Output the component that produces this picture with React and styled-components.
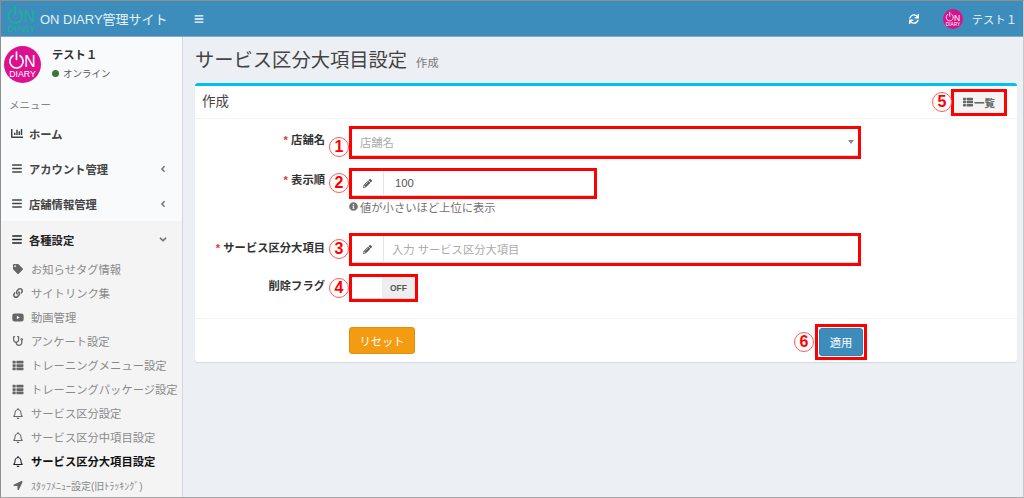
import React from "react"
import styled, { createGlobalStyle } from "styled-components"
import {
  FaAngleDown,
  FaAngleLeft,
  FaBars,
  FaChartBar,
  FaInfoCircle,
  FaLink,
  FaLocationArrow,
  FaPencilAlt,
  FaRegBell,
  FaStethoscope,
  FaSync,
  FaTag,
  FaThList,
  FaYoutube,
} from "react-icons/fa"

const GlobalStyle = createGlobalStyle`
  html, body {
    margin: 0;
    height: 100%;
    overflow: hidden;
  }
  body {
    font-family: "Liberation Sans", "Noto Sans CJK JP", sans-serif;
    color: #333;
  }
`

const Logo = ({ size, color, background }) => (
  <svg
    width={size}
    height={size}
    viewBox={background ? "0 0 40 40" : "5 4 30 30"}
    aria-hidden="true"
  >
    {background && <circle cx="20" cy="20" r="20" fill={background} />}
    <path
      d="M9.6 10.5a7.2 7.2 0 1 0 7.8 0"
      fill="none"
      stroke={color}
      strokeWidth="1.8"
      strokeLinecap="round"
    />
    <path d="M13.5 6.5v8" stroke={color} strokeWidth="1.8" strokeLinecap="round" />
    <text x="22" y="23" fontSize="17" fontFamily="Liberation Sans" fill={color}>
      N
    </text>
    <text
      x="20"
      y="33"
      fontSize="9.5"
      textAnchor="middle"
      fontFamily="Liberation Sans"
      fill={color}
    >
      DIARY
    </text>
  </svg>
)

const App = () => (
  <Page>
    <GlobalStyle />
    <Header>
      <Brand>
        <Logo size={29} color="#1fb096" />
        <BrandName>ON DIARY管理サイト</BrandName>
      </Brand>
      <HeaderToggle>
        <FaBars />
      </HeaderToggle>
      <HeaderRight>
        <FaSync size={10} />
        <HeaderUser>
          <Logo size={20} color="#fff" background="#d9128c" />
          テスト１
        </HeaderUser>
      </HeaderRight>
    </Header>
    <Body>
      <Sidebar>
        <UserPanel>
          <Logo size={37} color="#fff" background="#dd1190" />
          <UserInfo>
            <UserName>テスト１</UserName>
            <UserStatus>
              <StatusDot />
              オンライン
            </UserStatus>
          </UserInfo>
        </UserPanel>
        <MenuTitle>メニュー</MenuTitle>
        <MenuItem>
          <FaChartBar size={13} />
          <span>ホーム</span>
        </MenuItem>
        <MenuItem>
          <FaBars size={11} />
          <span>アカウント管理</span>
          <Chevron>
            <FaAngleLeft size={10} />
          </Chevron>
        </MenuItem>
        <MenuItem>
          <FaBars size={11} />
          <span>店舗情報管理</span>
          <Chevron>
            <FaAngleLeft size={10} />
          </Chevron>
        </MenuItem>
        <OpenGroup>
          <MenuItem $open>
            <FaBars size={11} />
            <span>各種設定</span>
            <Chevron>
              <FaAngleDown size={11} />
            </Chevron>
          </MenuItem>
          <SubItem>
            <FaTag size={10} />
            お知らせタグ情報
          </SubItem>
          <SubItem>
            <FaLink size={10} />
            サイトリンク集
          </SubItem>
          <SubItem>
            <FaYoutube size={11} />
            動画管理
          </SubItem>
          <SubItem>
            <FaStethoscope size={10} />
            アンケート設定
          </SubItem>
          <SubItem>
            <FaThList size={11} />
            トレーニングメニュー設定
          </SubItem>
          <SubItem>
            <FaThList size={11} />
            トレーニングパッケージ設定
          </SubItem>
          <SubItem>
            <FaRegBell size={11} />
            サービス区分設定
          </SubItem>
          <SubItem>
            <FaRegBell size={11} />
            サービス区分中項目設定
          </SubItem>
          <SubItem $active>
            <FaRegBell size={11} />
            サービス区分大項目設定
          </SubItem>
          <SubItem $narrow>
            <FaLocationArrow size={9} />
            ｽﾀｯﾌﾒﾆｭｰ設定(旧ﾄﾗｯｷﾝｸﾞ)
          </SubItem>
        </OpenGroup>
      </Sidebar>
      <Content>
        <PageTitle>
          サービス区分大項目設定
          <small>作成</small>
        </PageTitle>
        <Card>
          <CardHeader>
            <CardTitle>作成</CardTitle>
            <Marked>
              <Badge $left={-22}>5</Badge>
              <ListButton>
                <FaThList size={10} />
                一覧
              </ListButton>
            </Marked>
          </CardHeader>
          <FormBody>
            <FormRow $height={27} $gap={15}>
              <FieldLabel $required $top={4}>
                店舗名
              </FieldLabel>
              <Field $width={506}>
                <Badge $drop={5}>1</Badge>
                <FieldText $placeholder>店舗名</FieldText>
                <SelectArrow />
              </Field>
            </FormRow>
            <FormRow $height={25} $gap={3}>
              <FieldLabel $required $top={2}>
                表示順
              </FieldLabel>
              <Field $width={242}>
                <Badge>2</Badge>
                <Addon>
                  <FaPencilAlt size={9} />
                </Addon>
                <FieldText>100</FieldText>
              </Field>
            </FormRow>
            <HelpText>
              <FaInfoCircle size={9} />
              値が小さいほど上位に表示
            </HelpText>
            <FormRow $height={27} $gap={14}>
              <FieldLabel $required $top={5}>
                サービス区分大項目
              </FieldLabel>
              <Field $width={506}>
                <Badge>3</Badge>
                <Addon>
                  <FaPencilAlt size={9} />
                </Addon>
                <FieldText $placeholder>入力 サービス区分大項目</FieldText>
              </Field>
            </FormRow>
            <FormRow $height={22} $gap={19}>
              <FieldLabel $top={2}>削除フラグ</FieldLabel>
              <Field $width={63} $plain>
                <Badge>4</Badge>
                <ToggleBlank />
                <ToggleOff>OFF</ToggleOff>
              </Field>
            </FormRow>
          </FormBody>
          <CardFooter>
            <ResetButton>リセット</ResetButton>
            <Marked $pad={1}>
              <Badge $left={-24}>6</Badge>
              <ApplyButton>適用</ApplyButton>
            </Marked>
          </CardFooter>
        </Card>
      </Content>
    </Body>
  </Page>
)

export default App

const Page = styled.div`
  width: 1024px;
  height: 498px;
  box-sizing: border-box;
  display: flex;
  flex-direction: column;
  overflow: hidden;
  border-top: 1px solid #8f8f8f;
  border-left: 1px solid #8f8f8f;
  border-right: 1px solid #c9c9c9;
  border-bottom: 1px solid #a8a8a8;
  background: #ecf0f5;
`
const Header = styled.header`
  height: 36px;
  box-sizing: border-box;
  flex: none;
  display: flex;
  align-items: center;
  background: #3c8dbc;
  color: #fff;
  border-bottom: 1px solid #8aa9bf;
`
const Brand = styled.div`
  width: 193px;
  flex: none;
  display: flex;
  align-items: center;
  gap: 4px;
  padding-left: 6px;
  box-sizing: border-box;
`
const BrandName = styled.span`
  font-size: 13px;
  color: #e6f1f7;
`
const HeaderToggle = styled.div`
  display: flex;
  font-size: 10px;
`
const HeaderRight = styled.div`
  margin-left: auto;
  display: flex;
  align-items: center;
  gap: 24px;
  padding-right: 6px;
`
const HeaderUser = styled.div`
  display: flex;
  align-items: center;
  gap: 9px;
  font-size: 11.3px;
  color: #e6f1f7;
`
const Body = styled.div`
  flex: 1;
  min-height: 0;
  display: flex;
`
const Sidebar = styled.aside`
  width: 181px;
  flex: none;
  display: flex;
  flex-direction: column;
  overflow: hidden;
  background: #f9fafc;
  border-right: 1px solid #d2d6de;
`
const UserPanel = styled.div`
  display: flex;
  gap: 11px;
  padding: 9px 0 0 3px;
`
const UserInfo = styled.div`
  display: flex;
  flex-direction: column;
  gap: 5px;
  padding-top: 2px;
`
const UserName = styled.div`
  font-size: 11.3px;
  font-weight: 700;
  line-height: 14px;
`
const UserStatus = styled.div`
  display: flex;
  align-items: center;
  gap: 4px;
  font-size: 9.5px;
  line-height: 13px;
  color: #555;
`
const StatusDot = styled.i`
  width: 7px;
  height: 7px;
  border-radius: 50%;
  background: #3c763d;
`
const MenuTitle = styled.div`
  padding: 15px 0 0 8px;
  height: 26px;
  font-size: 10.5px;
  line-height: 15px;
  color: #848484;
`
const MenuItem = styled.div`
  height: 35px;
  flex: none;
  display: flex;
  align-items: center;
  gap: 6px;
  padding: 0 13px 0 10px;
  font-size: 11.3px;
  font-weight: 700;
  color: ${(props) => (props.$open ? "#222" : "#444")};
  svg {
    width: 12px;
    flex: none;
  }
`
const Chevron = styled.span`
  margin-left: auto;
  display: flex;
  color: #777;
`
const OpenGroup = styled.div`
  flex: 1;
  padding-top: 1px;
  background: #f4f4f5;
`
const SubItem = styled.div`
  height: 24px;
  display: flex;
  align-items: center;
  gap: 7px;
  padding-left: 11px;
  font-size: ${(props) => (props.$narrow ? "10px" : "11.3px")};
  font-weight: ${(props) => (props.$active ? 700 : 400)};
  color: ${(props) => (props.$active ? "#111" : "#8a8a8a")};
  white-space: nowrap;
  svg {
    width: 12px;
    flex: none;
    color: ${(props) => (props.$active ? "#222" : "#666")};
  }
`
const Content = styled.main`
  flex: 1;
  min-width: 0;
  padding: 0 6px 0 12px;
`
const PageTitle = styled.h1`
  margin: 0;
  height: 46px;
  display: flex;
  align-items: center;
  gap: 9px;
  padding-bottom: 2px;
  box-sizing: border-box;
  font-size: 19.3px;
  font-weight: 400;
  color: #444;
  small {
    font-size: 11.3px;
    color: #777;
    padding-top: 6px;
  }
`
const Card = styled.section`
  background: #fff;
  border-top: 3px solid #00c0ef;
  border-radius: 3px;
  box-shadow: 0 1px 1px rgba(0, 0, 0, 0.1);
`
const CardHeader = styled.div`
  height: 32px;
  display: flex;
  align-items: center;
  justify-content: space-between;
  padding: 0 13px 0 7px;
  border-bottom: 1px solid #f4f4f4;
`
const CardTitle = styled.h3`
  margin: 0;
  padding-bottom: 4px;
  font-size: 13.5px;
  font-weight: 400;
  color: #444;
`
const Marked = styled.div`
  position: relative;
  display: flex;
  padding: ${(props) => props.$pad || 0}px;
  outline: 3px solid #f00;
  background: #fff;
`
const ListButton = styled.button`
  width: 50px;
  height: 21px;
  display: flex;
  align-items: center;
  justify-content: center;
  gap: 1px;
  padding: 0;
  border: 0;
  background: #f4f4f4;
  font: 700 10.5px "Liberation Sans", "Noto Sans CJK JP", sans-serif;
  color: #666;
`
const Badge = styled.span`
  position: absolute;
  top: 50%;
  left: ${(props) => props.$left || -23}px;
  width: 20px;
  height: 20px;
  box-sizing: border-box;
  margin-top: ${(props) => (props.$drop || 0) - 10}px;
  display: flex;
  align-items: center;
  justify-content: center;
  border: 1px solid #ff5a5a;
  border-radius: 50%;
  background: #fff;
  font: 700 16px/1 "Liberation Sans", sans-serif;
  color: #f00;
`
const FormBody = styled.div`
  padding-top: 10px;
`
const FormRow = styled.div`
  height: ${(props) => props.$height}px;
  margin-bottom: ${(props) => props.$gap}px;
  display: flex;
  gap: 27px;
`
const FieldLabel = styled.label`
  width: 130px;
  flex: none;
  box-sizing: border-box;
  padding-top: ${(props) => props.$top}px;
  text-align: right;
  font-size: 11.3px;
  font-weight: 700;
  line-height: 15px;
  color: #333;
  white-space: nowrap;
  &::before {
    content: ${(props) => (props.$required ? '"* "' : '""')};
    color: #e23b3b;
  }
`
const Field = styled.div`
  position: relative;
  width: ${(props) => props.$width}px;
  box-sizing: border-box;
  display: flex;
  align-items: stretch;
  outline: 3px solid #f00;
  border-bottom: 1px solid ${(props) => (props.$plain ? "#ddd" : "#d2d6de")};
  background: #fff;
`
const FieldText = styled.div`
  flex: 1;
  display: flex;
  align-items: center;
  padding-left: ${(props) => (props.$placeholder ? 8 : 11)}px;
  font-size: 11.3px;
  color: ${(props) => (props.$placeholder ? "#aaa" : "#555")};
`
const Addon = styled.div`
  width: 32px;
  flex: none;
  display: flex;
  align-items: center;
  justify-content: center;
  box-sizing: border-box;
  border-right: 1px solid #e4e6ea;
  color: #555;
`
const SelectArrow = styled.i`
  position: absolute;
  right: 4px;
  top: 11px;
  border-style: solid;
  border-width: 4px 3px 0;
  border-color: #888 transparent transparent;
`
const HelpText = styled.div`
  height: 15px;
  margin: 0 0 22px 154px;
  display: flex;
  align-items: center;
  gap: 2px;
  font-size: 11.3px;
  color: #737373;
`
const ToggleBlank = styled.div`
  width: 30px;
`
const ToggleOff = styled.div`
  flex: 1;
  display: flex;
  align-items: center;
  justify-content: center;
  background: #eee;
  font-size: 8.5px;
  font-weight: 700;
  color: #555;
`
const CardFooter = styled.div`
  display: flex;
  align-items: flex-start;
  justify-content: space-between;
  height: 44px;
  box-sizing: border-box;
  padding: 8px 153px 0 154px;
  border-top: 1px solid #f4f4f4;
`
const ResetButton = styled.button`
  width: 66px;
  height: 27px;
  padding: 0;
  border: 1px solid #e08e0b;
  border-radius: 3px;
  background: #f39c12;
  font: 11.3px "Liberation Sans", "Noto Sans CJK JP", sans-serif;
  color: #fff;
`
const ApplyButton = styled.button`
  width: 44px;
  height: 28px;
  padding: 0;
  border: 1px solid #367fa9;
  border-radius: 3px;
  background: #3c8dbc;
  font: 11.3px "Liberation Sans", "Noto Sans CJK JP", sans-serif;
  color: #fff;
`
